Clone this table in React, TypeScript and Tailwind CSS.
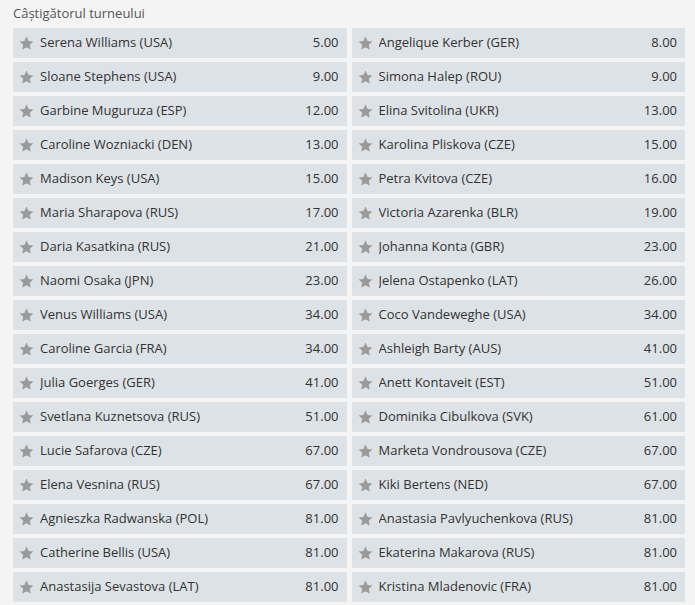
const odds: [string, string][] = [
  ["Serena Williams (USA)", "5.00"],
  ["Angelique Kerber (GER)", "8.00"],
  ["Sloane Stephens (USA)", "9.00"],
  ["Simona Halep (ROU)", "9.00"],
  ["Garbine Muguruza (ESP)", "12.00"],
  ["Elina Svitolina (UKR)", "13.00"],
  ["Caroline Wozniacki (DEN)", "13.00"],
  ["Karolina Pliskova (CZE)", "15.00"],
  ["Madison Keys (USA)", "15.00"],
  ["Petra Kvitova (CZE)", "16.00"],
  ["Maria Sharapova (RUS)", "17.00"],
  ["Victoria Azarenka (BLR)", "19.00"],
  ["Daria Kasatkina (RUS)", "21.00"],
  ["Johanna Konta (GBR)", "23.00"],
  ["Naomi Osaka (JPN)", "23.00"],
  ["Jelena Ostapenko (LAT)", "26.00"],
  ["Venus Williams (USA)", "34.00"],
  ["Coco Vandeweghe (USA)", "34.00"],
  ["Caroline Garcia (FRA)", "34.00"],
  ["Ashleigh Barty (AUS)", "41.00"],
  ["Julia Goerges (GER)", "41.00"],
  ["Anett Kontaveit (EST)", "51.00"],
  ["Svetlana Kuznetsova (RUS)", "51.00"],
  ["Dominika Cibulkova (SVK)", "61.00"],
  ["Lucie Safarova (CZE)", "67.00"],
  ["Marketa Vondrousova (CZE)", "67.00"],
  ["Elena Vesnina (RUS)", "67.00"],
  ["Kiki Bertens (NED)", "67.00"],
  ["Agnieszka Radwanska (POL)", "81.00"],
  ["Anastasia Pavlyuchenkova (RUS)", "81.00"],
  ["Catherine Bellis (USA)", "81.00"],
  ["Ekaterina Makarova (RUS)", "81.00"],
  ["Anastasija Sevastova (LAT)", "81.00"],
  ["Kristina Mladenovic (FRA)", "81.00"],
];

function Star() {
  return (
    <svg width="15" height="14" viewBox="0 0 24 23" className="shrink-0">
      <path
        d="M12 0.8l3.4 7.3 7.9 0.9-5.9 5.4 1.6 7.8L12 18.3l-7 3.9 1.6-7.8L0.7 9l7.9-0.9z"
        fill="#9a9a9a"
      />
    </svg>
  );
}

export default function App() {
  return (
    <div
      className="w-[695px] h-[605px] bg-[#f4f4f4] pl-[13px] pr-[10px] overflow-hidden"
      style={{ fontFamily: '"Open Sans", "Liberation Sans", sans-serif' }}
    >
      <div className="h-[28px] pt-[3px] text-[13px] leading-[20px] text-[#555]">
        Câștigătorul turneului
      </div>
      <div className="grid grid-cols-2 gap-x-[5px] gap-y-[4px]">
        {odds.map(([name, price]) => (
          <div
            key={name}
            className="h-[30px] bg-[#dde2e6] flex items-center pl-[6px] pr-[8px] text-[13px] text-[#333] cursor-pointer"
          >
            <Star />
            <span className="ml-[6px] flex-1 truncate">{name}</span>
            <span>{price}</span>
          </div>
        ))}
      </div>
    </div>
  );
}
